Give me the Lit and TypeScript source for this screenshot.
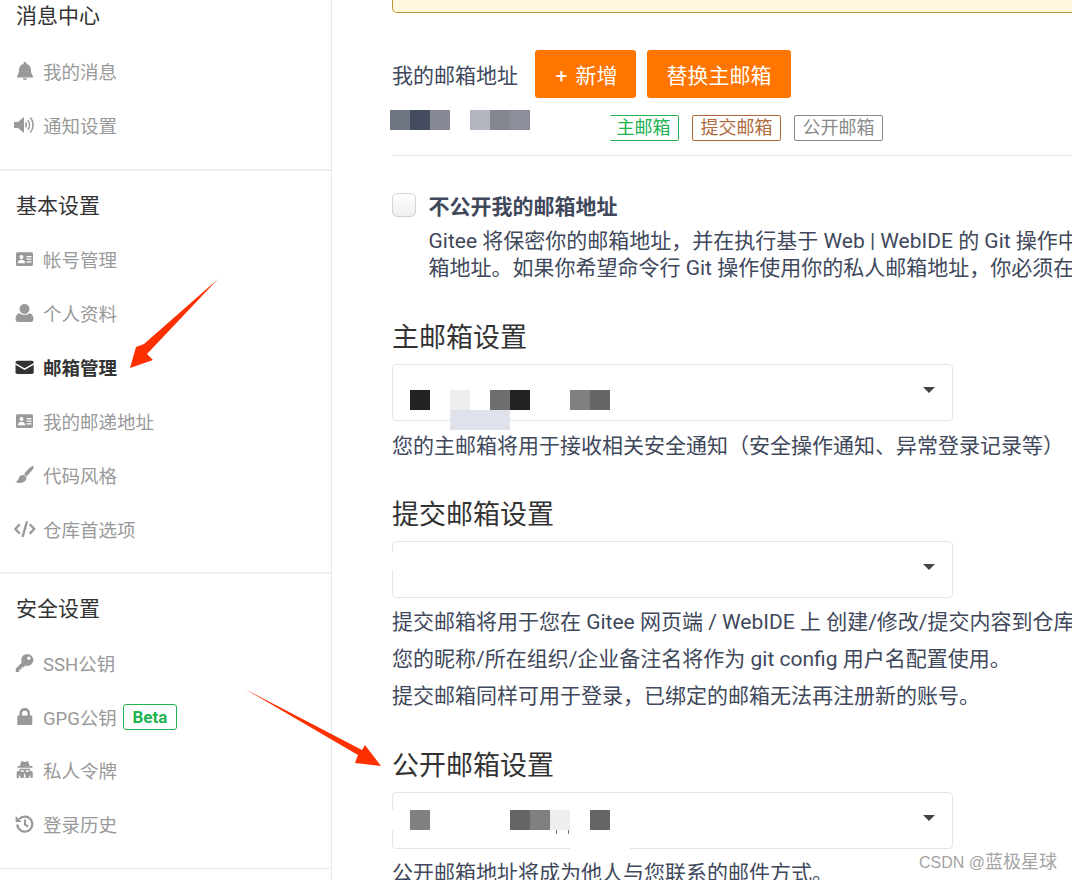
import { LitElement, html, css, svg } from "lit";
import { customElement } from "lit/decorators.js";

const I: Record<string, any> = {
  bell: svg`<path d="M11 1c.9 0 1.500.6 1.500 1.500v.6c3.100.7 4.500 3 4.500 6 0 3.500 1 4.700 2 6v1.400H3v-1.400c1-1.300 2-2.500 2-6 0-3 1.400-5.300 4.500-6v-.6C9.500 1.600 10.100 1 11 1zM8.700 17.300h4.600c0 1-.9 1.700-2.300 1.700s-2.300-.7-2.300-1.700z"/>`,
  sound: svg`<path d="M0 7h4l6-5v16l-6-5H0z"/><g fill="none" stroke="currentColor" stroke-width="1.500"><path d="M11.500 7.500c1 1.500 1 3.500 0 5"/><path d="M13.800 5.200c2.200 2.800 2.200 6.800 0 9.600"/><path d="M16.300 2.500c3.700 4.200 3.700 10.800 0 15"/></g>`,
  card: svg`<path fill-rule="evenodd" d="M3.500 3.300h14c.8 0 1.500.7 1.500 1.500v10.700c0 .8-.7 1.500-1.500 1.500h-14c-.8 0-1.500-.7-1.500-1.500V4.800c0-.8.700-1.500 1.500-1.500zM7.500 6a2 2 0 1 0 0 4 2 2 0 0 0 0-4zM3.800 14.200h7.400c0-2-1.400-3.400-3.700-3.400s-3.700 1.400-3.700 3.400zM12.500 7v1.200h5V7zm0 2.600v1.200h5V9.600zm0 2.600v1.200h5v-1.200z"/>`,
  user: svg`<circle cx="10.500" cy="6" r="5"/><path d="M1.500 16c0-3.300 1.800-5.500 4-5.800 1.300 1 3.100 1.600 5 1.600s3.700-.6 5-1.600c2.200.3 4 2.500 4 5.800 0 1.800-1 3-2.700 3H4.200c-1.700 0-2.700-1.200-2.700-3z"/>`,
  mail: svg`<rect x="1.500" y="3.700" width="18.200" height="13.300" rx="1.800"/><path d="M1 6.700l9.600 5.500 9.600-5.500" fill="none" stroke="#fff" stroke-width="1.500"/>`,
  brush: svg`<path d="M19.300 1.100c.7.4.6 1.300.1 2.100-1.800 3-4.300 5.900-6.800 8.200L10 8.900c2.300-2.800 5-5.600 7.300-7.300.7-.5 1.400-.8 2-.5z"/><path d="M9.300 10c1.800.2 3 1.500 3.100 3.100.1 2.900-2.900 4.900-6.400 4.900-2 0-3.500-.6-4.500-1.600 1.800-.1 2.400-1 2.900-2.500C5.100 11.200 7 9.700 9.300 10z"/>`,
  code: svg`<g fill="none" stroke="currentColor" stroke-width="2.400"><path d="M5.800 5.200 1.300 10l4.500 4.800"/><path d="M15.700 5.200l4.500 4.800-4.500 4.800"/><path d="M13 2.500 8.500 18"/></g>`,
  key: svg`<path fill-rule="evenodd" d="M13.300 1a6 6 0 1 1-2.100 11.600L9.800 14.200H7.500v2.300H5.200v2.500H1.800v-3.500l6-6A6 6 0 0 1 13.300 1zm1.500 2.500a1.700 1.700 0 1 0 0 3.400 1.700 1.700 0 0 0 0-3.400z"/>`,
  lock: svg`<path fill-rule="evenodd" d="M10.800 1c3.300 0 5.200 2.200 5.200 5.300V8.500h1.300c.6 0 1 .4 1 1V17c0 .6-.4 1-1 1H4.300c-.6 0-1-.4-1-1V9.500c0-.6.400-1 1-1h1.200V6.300C5.500 3.200 7.500 1 10.800 1zm0 2.700c-1.900 0-2.800 1.100-2.800 2.700v2.100h5.500V6.400c0-1.600-.9-2.700-2.700-2.700z"/>`,
  spy: svg`<path d="M7.300 1l3.400 1 3.400-1 1.500 5h2.500l.6 1.700H3.300L3.900 6h2z"/><path d="M5.300 8.700h10.900l-.4 1.800 2.900 1.300V18H2.700v-6.200l3-1.300z"/><path d="M6.800 11h3M11.800 11h3" stroke="#fff" stroke-width="1.600"/><path d="M10.700 12.500l-1.100 5h2.200zM5 14.500l2 3.500H5zM16.500 14.500l-2 3.500h2z" fill="#fff"/>`,
  history: svg`<path d="M5.200 5.100A7.500 7.500 0 1 1 3.300 10.500" fill="none" stroke="currentColor" stroke-width="2.200"/><path d="M1.700 2 7.700 8H1.700z"/><path d="M11 5.500v5.200l3.300 2" fill="none" stroke="currentColor" stroke-width="2"/>`,
};

const ic = (n: string) => html`<svg class="ic" viewBox="0 0 22 20" fill="currentColor" aria-hidden="true">${I[n]}</svg>`;

type Blot = [number, number, number, number, string];

@customElement("app-root")
export class AppRoot extends LitElement {
  static styles = css`
    :host { display: block; width: 1072px; height: 880px; overflow: hidden; position: relative; background: #fff;
      font-family: Roboto, "Noto Sans CJK SC", sans-serif; color: #40485b; }
    * { box-sizing: border-box; }
    .page { display: flex; height: 880px; }
    .side { width: 332px; flex: none; border-right: 1px solid #e9e9e9; height: 880px; }
    .group { border-bottom: 2px solid #f0f0f0; }
    .g1 { height: 172px; margin-top: -1px; }
    .g2 { height: 403px; }
    .g3 { height: 295px; border-bottom: 1px solid #e6e6e6; }
    .gt { font-size: 21px; line-height: 30px; color: #333; padding-left: 16px; padding-top: 20px; height: 61px; }
    .g1 .gt { padding-top: 2px; height: 45px; }
    .g3 .gt { height: 62px; }
    .item { height: 54px; display: flex; align-items: center; padding-left: 14px; color: #999; font-size: 18.500px; }
    .g3 .item { height: 53.800px; }
    .item.on { color: #333; font-weight: 700; }
    .ic { width: 22px; height: 20px; flex: none; margin-right: 7px; }
    .beta { margin-left: 6px; height: 26px; width: 54px; border: 1px solid #21b351; border-radius: 3px; color: #21b351;
      font-size: 17px; font-weight: 700; display: flex; align-items: center; justify-content: center; }

    .main { flex: 1; padding-left: 60px; min-width: 0; overflow: hidden; position: relative; }
    .notice { height: 13px; width: 720px; background: #fff8dd; border: 1px solid #bd9535; border-top: 0; border-radius: 0 0 5px 5px; }
    .addr { display: flex; align-items: center; height: 48px; margin-top: 37px; font-size: 21px; }
    .addr-label { width: 143px; }
    .btn { height: 48px; background: #ff7500; color: #fff; border-radius: 3px; display: flex; align-items: center; justify-content: center; font-size: 21px; }
    .b1 { width: 101px; margin-right: 11px; word-spacing: 3px; padding-left: 2px; }
    .b2 { width: 144px; }
    .mail-row { height: 58px; border-bottom: 1px solid #e3e3e3; display: flex; width: 740px; padding-top: 17px; padding-left: 218px; gap: 13px; }
    .tag { height: 26px; padding: 0 7.500px; border: 1px solid; border-radius: 2px; font-size: 18px; line-height: 24px; white-space: nowrap; }
    .t1 { color: #21b351; border-color: #21b351; border-left-color: transparent; border-radius: 0 2px 2px 0; padding-left: 5.500px; }
    .t2 { color: #ae6a3e; border-color: #ae6a3e; }
    .t3 { color: #8a8a8a; border-color: #8a8a8a; }
    .check { display: flex; margin-top: 37px; white-space: nowrap; }
    .box { width: 24px; height: 24px; border: 1px solid #d2d3d6; border-radius: 5px; background: linear-gradient(#fff, #eeeff1); margin-right: 12.500px; flex: none; }
    .ctext { padding-top: 2px; }
    .ct { font-size: 21px; font-weight: 700; line-height: 24px; }
    .cd { font-size: 21px; line-height: 27px; margin-top: 9px; }
    .h { font-size: 27px; line-height: 36px; color: #333; font-weight: 400; margin: 0; }
    .h1 { margin-top: 38px; }
    .h2, .h3 { margin-top: 33px; }
    .sel { width: 561px; height: 57px; border: 1px solid #e3e5ec; border-radius: 4px; margin-top: 8px; position: relative; background: #fff; }
    .sel i { position: absolute; left: 530px; top: 22px; width: 0; height: 0; border: 6px solid transparent; border-top: 6px solid #444; border-bottom: 0; }
    .p { font-size: 21px; line-height: 37px; white-space: nowrap; }
    .p1 { margin-top: 7px; line-height: 36px; height: 36px; }
    .p2 { margin-top: 6px; }
    .p3 { margin-top: 6px; line-height: 36px; }
    .blots { position: absolute; left: 0; top: 0; }
    .blots b { position: absolute; display: block; }
    .wm { position: absolute; left: 919px; top: 850px; font-size: 18px; line-height: 24px; color: #a4a4a4; white-space: nowrap; }
    .wm span { font-family: "Liberation Sans", sans-serif; font-size: 16px; }
  `;

  blots(list: Blot[]) {
    return list.map(([x, y, w, h, c]) => html`<b style="left:${x}px;top:${y}px;width:${w}px;height:${h}px;background:${c}"></b>`);
  }

  render() {
    return html`
      <div class="page">
        <aside class="side">
          <div class="group g1">
            <div class="gt">消息中心</div>
            <div class="item">${ic("bell")}我的消息</div>
            <div class="item">${ic("sound")}通知设置</div>
          </div>
          <div class="group g2">
            <div class="gt">基本设置</div>
            <div class="item">${ic("card")}帐号管理</div>
            <div class="item">${ic("user")}个人资料</div>
            <div class="item on">${ic("mail")}邮箱管理</div>
            <div class="item">${ic("card")}我的邮递地址</div>
            <div class="item">${ic("brush")}代码风格</div>
            <div class="item">${ic("code")}仓库首选项</div>
          </div>
          <div class="group g3">
            <div class="gt">安全设置</div>
            <div class="item">${ic("key")}SSH公钥</div>
            <div class="item">${ic("lock")}GPG公钥<span class="beta">Beta</span></div>
            <div class="item">${ic("spy")}私人令牌</div>
            <div class="item">${ic("history")}登录历史</div>
          </div>
        </aside>
        <main class="main">
          <div class="notice"></div>
          <div class="addr">
            <span class="addr-label">我的邮箱地址</span>
            <span class="btn b1">+ 新增</span>
            <span class="btn b2">替换主邮箱</span>
          </div>
          <div class="mail-row">
            <span class="tag t1">主邮箱</span>
            <span class="tag t2">提交邮箱</span>
            <span class="tag t3">公开邮箱</span>
          </div>
          <div class="check">
            <span class="box"></span>
            <div class="ctext">
              <div class="ct">不公开我的邮箱地址</div>
              <div class="cd">Gitee 将保密你的邮箱地址，并在执行基于 Web | WebIDE 的 Git 操作中<br />箱地址。如果你希望命令行 Git 操作使用你的私人邮箱地址，你必须在</div>
            </div>
          </div>
          <h3 class="h h1">主邮箱设置</h3>
          <div class="sel"><i></i></div>
          <div class="p p1">您的主邮箱将用于接收相关安全通知（安全操作通知、异常登录记录等）</div>
          <h3 class="h h2">提交邮箱设置</h3>
          <div class="sel"><i></i></div>
          <div class="p p2">提交邮箱将用于您在 Gitee 网页端 / WebIDE 上 创建/修改/提交内容到仓库<br />您的昵称/所在组织/企业备注名将作为 git config 用户名配置使用。<br />提交邮箱同样可用于登录，已绑定的邮箱无法再注册新的账号。</div>
          <h3 class="h h3">公开邮箱设置</h3>
          <div class="sel"><i></i></div>
          <div class="p p3">公开邮箱地址将成为他人与您联系的邮件方式。</div>
        </main>
      </div>
      <div class="blots">
        ${this.blots([
          [390, 110, 20, 20, "#6e7482"], [410, 110, 20, 20, "#454c60"], [430, 110, 20, 20, "#878a96"],
          [470, 110, 20, 20, "#b4b6bf"], [490, 110, 20, 20, "#84878f"], [510, 110, 20, 20, "#8c8e99"],
          [410, 390, 20, 20, "#222"], [450, 390, 20, 20, "#eee"], [490, 390, 20, 20, "#6e6e6e"], [510, 390, 20, 20, "#222"],
          [570, 390, 20, 20, "#808080"], [590, 390, 20, 20, "#666"], [450, 410, 60, 20, "#dfe2ea"],
          [392, 552, 2, 18, "#fff"], [392, 810, 2, 20, "#fff"],
          [410, 810, 20, 20, "#808080"], [510, 810, 20, 20, "#666"], [530, 810, 20, 20, "#808080"], [550, 810, 20, 20, "#eee"],
          [590, 810, 20, 20, "#666"], [570, 830, 60, 20, "#fff"], [556, 830, 1, 4, "#777"], [568, 830, 1, 4, "#777"],
        ])}
      </div>
      <svg class="blots" width="1072" height="880" viewBox="0 0 1072 880" aria-hidden="true">
        <path d="M218 279 L144 344 L136 347 L130 368 L153 360 L147 354 Z" fill="#ff3000" />
        <path d="M245 689 L362 750 L365 745 L381 766 L355 763 L358 755 Z" fill="#ff3000" />
      </svg>
      <div class="wm"><span>CSDN @</span>蓝极星球</div>
    `;
  }
}
